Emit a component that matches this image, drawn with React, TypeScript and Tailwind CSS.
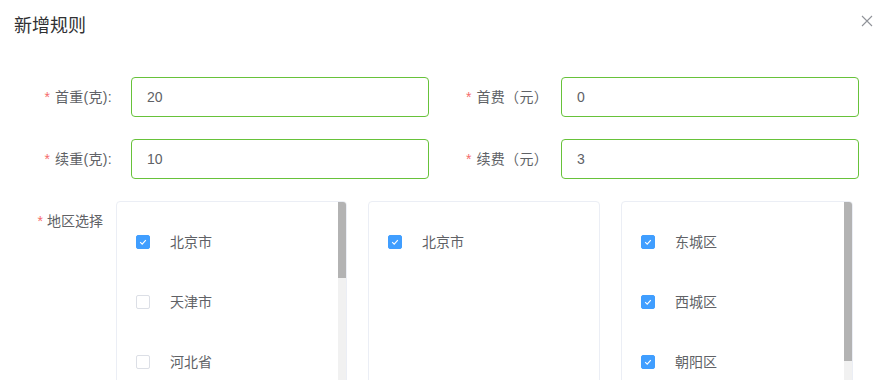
import React from "react";

const font = { fontFamily: '"Liberation Sans", "Noto Sans CJK SC", sans-serif' };

function Check({ checked }: { checked: boolean }) {
  return checked ? (
    <span className="w-[14px] h-[14px] rounded-[2px] bg-[#409eff] border border-[#409eff] flex items-center justify-center shrink-0">
      <svg width="10" height="10" viewBox="0 0 10 10">
        <polyline points="2.2,5.2 4.2,7.2 7.8,3.2" fill="none" stroke="#fff" strokeWidth="1.1" />
      </svg>
    </span>
  ) : (
    <span className="w-[14px] h-[14px] rounded-[2px] bg-white border border-[#dcdfe6] shrink-0" />
  );
}

function Item({ label, checked }: { label: string; checked: boolean }) {
  return (
    <div className="h-[60px] flex items-center pl-[19px] gap-[20px]">
      <Check checked={checked} />
      <span className="text-[14px] text-[#606266]">{label}</span>
    </div>
  );
}

function Panel({
  width,
  items,
  thumb,
}: {
  width: string;
  items: { label: string; checked: boolean }[];
  thumb?: string;
}) {
  return (
    <div className={`${width} h-[220px] border border-[#ebeef5] rounded-[4px] flex overflow-hidden bg-white`}>
      <div className="flex-1 pt-[10px]">
        {items.map((it) => (
          <Item key={it.label} {...it} />
        ))}
      </div>
      {thumb && (
        <div className="w-[8px] bg-[#f1f1f1] flex flex-col">
          <div className={`${thumb} bg-[#b3b3b3]`} />
        </div>
      )}
    </div>
  );
}

function Field({ label, value, labelPr }: { label: string; value: string; labelPr: string }) {
  return (
    <div className="flex items-center h-[40px]">
      <div className={`w-[111px] ${labelPr} text-right text-[14px] text-[#606266] whitespace-nowrap`}>
        <span className="text-[#f56c6c] mr-[5px]">*</span>
        <span className="tracking-[0.3px]">{label}</span>
      </div>
      <div className="w-[298px] h-[40px] border border-[#67c23a] rounded-[4px] px-[15px] flex items-center text-[14px] text-[#606266]">
        {value}
      </div>
    </div>
  );
}

export default function App() {
  return (
    <div className="w-[879px] h-[380px] overflow-hidden bg-white relative" style={font}>
      <div className="pt-[14px] px-[14px] h-[38px] flex">
        <div className="text-[18px] leading-[24px] text-[#303133] font-normal">新增规则</div>
      </div>
      <div className="absolute right-[6px] top-[15px] w-[12px] h-[12px]">
        <svg width="12" height="12" viewBox="0 0 12 12">
          <path d="M1 1 L11 11 M11 1 L1 11" stroke="#909399" strokeWidth="1.1" />
        </svg>
      </div>
      <div className="mt-[39px] px-[20px] grid grid-cols-2 gap-x-[21px] gap-y-[22px]">
        <Field label="首重(克):" value="20" labelPr="pr-[19px]" />
        <Field label="首费（元）" value="0" labelPr="pr-[13px]" />
        <Field label="续重(克):" value="10" labelPr="pr-[19px]" />
        <Field label="续费（元）" value="3" labelPr="pr-[13px]" />
      </div>
      <div className="mt-[22px] pl-[20px] flex">
        <div className="w-[96px] pr-[13px] text-right text-[14px] leading-[40px] text-[#606266] whitespace-nowrap">
          <span className="text-[#f56c6c] mr-[4px]">*</span>地区选择
        </div>
        <div className="flex gap-[21px]">
          <Panel
            width="w-[231px]"
            thumb="h-[76px]"
            items={[
              { label: "北京市", checked: true },
              { label: "天津市", checked: false },
              { label: "河北省", checked: false },
            ]}
          />
          <Panel width="w-[232px]" items={[{ label: "北京市", checked: true }]} />
          <Panel
            width="w-[232px]"
            thumb="h-[159px]"
            items={[
              { label: "东城区", checked: true },
              { label: "西城区", checked: true },
              { label: "朝阳区", checked: true },
            ]}
          />
        </div>
      </div>
    </div>
  );
}
